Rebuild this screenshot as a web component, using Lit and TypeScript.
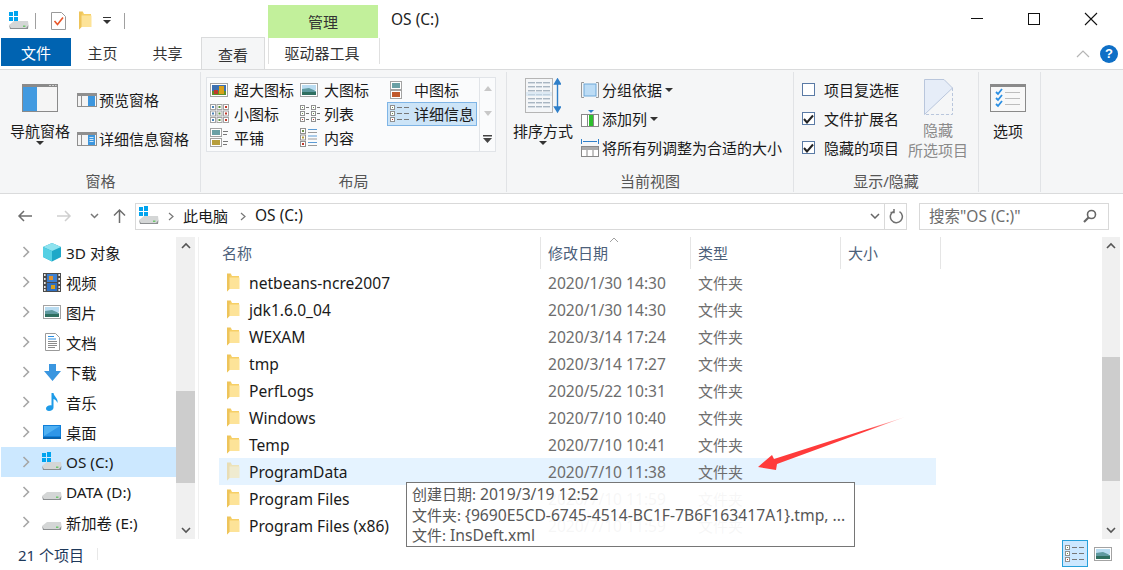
import { LitElement, html, css, svg } from "lit";
import { customElement } from "lit/decorators.js";

const drive = (win = false) => html`<svg width="22" height="20" viewBox="0 0 22 20">
  ${win ? svg`<g fill="#00a4ef"><rect x="1" y="1" width="4" height="4"/><rect x="6" y="0" width="4" height="5"/><rect x="1" y="6" width="4" height="4"/><rect x="6" y="6" width="4" height="4"/></g>` : ""}
  <path d="M1 14 L6 10 H20 L20.5 14 L18 17 H3 Z" fill="#d4d6d6"/><path d="M1 14 L3 17 H18 L20.5 14 L20 18 H2 Z" fill="#8b8e90"/><rect x="15" y="14.6" width="2.4" height="1.2" fill="#57c255"/></svg>`;

const folder = (o = 1) => html`<svg width="14" height="19" viewBox="0 0 14 19" style="opacity:${o}">
  <path d="M1 1 H5 L6 3 H13 V15.5 H1 Z" fill="#f6cf66"/><path d="M1 4.5 H13.5 V16 H3.5 L1 18.5 Z" fill="#fde398"/><path d="M1 0.5 V18.5 L3.5 16 V3 L5 0.5 Z" fill="#eec45a"/></svg>`;

const pic = (w = 18, h = 14) => html`<svg width="${w}" height="${h}" viewBox="0 0 18 14"><rect x=".5" y=".5" width="17" height="13" fill="#fff" stroke="#a3a3a3"/><rect x="2" y="2" width="14" height="5" fill="#b9dcf1"/><path d="M2 6 L9 5 L16 8 V12 H2 Z" fill="#5f9aa0"/><path d="M2 9 L16 9 V12 H2 Z" fill="#2f6f60"/></svg>`;

const pane = (detail: boolean) => html`<svg width="20" height="14" viewBox="0 0 20 14"><rect x=".5" y=".5" width="19" height="13" fill="#f4f4f4" stroke="#8f8f8f"/><rect x="1" y="1" width="18" height="2" fill="#8f8f8f"/><rect x="4" y="3" width="1" height="10" fill="#8f8f8f"/><rect x="11" y="3" width="7" height="10" fill="#3c96de"/>${detail ? svg`<g fill="#cfe5f7"><rect x="12.5" y="5" width="4" height="1"/><rect x="12.5" y="7" width="4" height="1"/><rect x="12.5" y="9" width="4" height="1"/></g>` : ""}</svg>`;

const galleryIcon = (kind: string) => {
  if (kind === "xl") return html`<svg width="18" height="14" viewBox="0 0 18 14"><rect x=".5" y=".5" width="17" height="13" fill="#fff" stroke="#a3a3a3"/><rect x="2" y="2" width="14" height="10" fill="#3b6fb0"/><rect x="2" y="8" width="14" height="4" fill="#5c8f2c"/><rect x="9" y="3" width="5" height="8" fill="#d9a019"/><rect x="4" y="7" width="4" height="4" fill="#c0392b"/></svg>`;
  if (kind === "l") return pic();
  if (kind === "m") return html`<svg width="18" height="18" viewBox="0 0 18 18"><rect x=".5" y=".5" width="11" height="8" fill="#fff" stroke="#a3a3a3"/><rect x="2" y="2" width="8" height="5" fill="#6aa0a5"/><rect x=".5" y="9.5" width="11" height="8" fill="#fff" stroke="#a3a3a3"/><rect x="2" y="11" width="8" height="5" fill="#c0582b"/></svg>`;
  if (kind === "s") return html`<svg width="19" height="19" viewBox="0 0 19 19">${[0, 6.5, 13].map((y) => [0, 6.5, 13].map((x) => svg`<rect x="${x + 0.5}" y="${y + 0.5}" width="5" height="5" fill="#fff" stroke="#a3a3a3"/><rect x="${x + 2}" y="${y + 2}" width="2" height="2" fill="${x > 10 ? "#c0392b" : x > 5 ? "#58913a" : "#4b82b8"}"/>`))}</svg>`;
  if (kind === "list") return html`<svg width="20" height="17" viewBox="0 0 20 17">${[0, 11].map((x) => [0, 6, 12].map((y) => svg`<rect x="${x + 0.5}" y="${y + 0.5}" width="4" height="4" fill="#fff" stroke="#909090"/><rect x="${x + 6}" y="${y + 2}" width="3" height="1" fill="#777"/><rect x="${x + 2}" y="${y + 2}" width="1" height="1" fill="${y > 10 ? "#c0392b" : "#6d8f4a"}"/>`))}</svg>`;
  if (kind === "detail") return html`<svg width="20" height="17" viewBox="0 0 20 17">${[0, 6, 12].map((y) => svg`<rect x=".5" y="${y + 0.5}" width="4" height="4" fill="#fff" stroke="#909090"/><rect x="2" y="${y + 2}" width="1" height="1" fill="${y > 10 ? "#c0392b" : "#6d8f4a"}"/><rect x="7" y="${y + 2}" width="5" height="1" fill="#777"/><rect x="14" y="${y + 2}" width="5" height="1" fill="#777"/>`)}</svg>`;
  if (kind === "tile") return html`<svg width="19" height="19" viewBox="0 0 19 19"><rect x=".5" y=".5" width="11" height="8" fill="#fff" stroke="#a3a3a3"/><rect x="2" y="2" width="8" height="5" fill="#6aa0a5"/><rect x=".5" y="10.5" width="11" height="8" fill="#fff" stroke="#a3a3a3"/><rect x="2" y="12" width="8" height="5" fill="#b79e3c"/><g fill="#777"><rect x="13" y="3" width="5" height="1"/><rect x="13" y="6" width="4" height="1"/><rect x="13" y="13" width="5" height="1"/><rect x="13" y="16" width="4" height="1"/></g></svg>`;
  return html`<svg width="18" height="19" viewBox="0 0 18 19">${[0, 6.5, 13].map((y, i) => svg`<rect x=".5" y="${y + 0.5}" width="5" height="5" fill="#fff" stroke="#909090"/><rect x="2" y="${y + 2}" width="2" height="2" fill="${["#6d8f4a", "#b79e3c", "#c0392b"][i]}"/><rect x="8" y="${y + 1}" width="9" height="1" fill="#5b9bd5"/><rect x="8" y="${y + 4}" width="9" height="1" fill="#9a9a9a"/>`)}</svg>`;
};

const chevronR = html`<svg width="8" height="12" viewBox="0 0 8 12"><path d="M1.5 1 L6.5 6 L1.5 11" fill="none" stroke="#a6a6a6" stroke-width="1.6"/></svg>`;

const navIcons: Record<string, unknown> = {
  cube: html`<svg width="20" height="19" viewBox="0 0 20 19"><path d="M10 0 L19 4 V14 L10 18.5 L1 14 V4 Z" fill="#1ea8c8"/><path d="M10 8 L19 4 L10 0 L1 4 Z" fill="#8fe3ef"/><path d="M10 8 V18.5 L1 14 V4 Z" fill="#55d0e4"/></svg>`,
  film: html`<svg width="18" height="19" viewBox="0 0 18 19"><rect width="18" height="19" fill="#4b4b4b"/><g fill="#e8e8e8">${[1, 5, 9, 13, 16].map((y) => svg`<rect x="1" y="${y}" width="1.6" height="2"/><rect x="15.4" y="${y}" width="1.6" height="2"/>`)}</g><rect x="4" y="1" width="10" height="8" fill="#3c7fd0"/><rect x="4" y="10" width="10" height="8" fill="#2f6fc0"/><rect x="6" y="3" width="4" height="4" fill="#e0902c"/><rect x="8" y="12" width="4" height="4" fill="#d9a019"/></svg>`,
  pic: pic(18, 14),
  doc: html`<svg width="15" height="18" viewBox="0 0 15 18"><path d="M.5 .5 H10.5 L14.5 4.5 V17.5 H.5 Z" fill="#fff" stroke="#9a9a9a"/><g fill="#8a8a8a"><rect x="3" y="8" width="9" height="1"/><rect x="3" y="10" width="9" height="1"/><rect x="3" y="12" width="9" height="1"/><rect x="3" y="14" width="7" height="1"/></g><rect x="3" y="3" width="6" height="1" fill="#2b8fe3"/><rect x="3" y="5.5" width="8" height="1" fill="#2b8fe3"/></svg>`,
  down: html`<svg width="17" height="17" viewBox="0 0 17 17"><path d="M5 0 H12 V7 H17 L8.5 17 L0 7 H5 Z" fill="#3a96e0"/></svg>`,
  music: html`<svg width="13" height="18" viewBox="0 0 13 18"><path d="M5.5 0 H7.5 C8 4 12.5 5 11.5 10 C10.5 7.5 9 6.5 7.5 6 V14.5 C7.5 16.5 5.5 18 3 18 C1 18 0 17 0 15.5 C0 13.5 2.5 12 5.5 12.4 Z" fill="#1e9be8"/></svg>`,
  desk: html`<svg width="18" height="14" viewBox="0 0 18 14"><rect width="18" height="13" fill="#0f7fd9"/><rect x="1" y="1" width="16" height="10" fill="#4fb0f2"/><path d="M1 11 L17 1 V11 Z" fill="#2f96e8"/><rect x="0" y="12" width="18" height="2" fill="#0a62ac"/></svg>`,
  win: drive(true),
  drive: drive(false),
};

const nav = [
  ["cube", "3D 对象"], ["film", "视频"], ["pic", "图片"], ["doc", "文档"], ["down", "下载"],
  ["music", "音乐"], ["desk", "桌面"], ["win", "OS (C:)"], ["drive", "DATA (D:)"], ["drive", "新加卷 (E:)"],
];

const files = [
  ["netbeans-ncre2007", "2020/1/30 14:30"], ["jdk1.6.0_04", "2020/1/30 14:30"], ["WEXAM", "2020/3/14 17:24"],
  ["tmp", "2020/3/14 17:27"], ["PerfLogs", "2020/5/22 10:31"], ["Windows", "2020/7/10 10:40"],
  ["Temp", "2020/7/10 10:41"], ["ProgramData", "2020/7/10 11:38"], ["Program Files", "2020/7/10 11:59"],
  ["Program Files (x86)", "2020/7/10 11:59"],
];

const caret = html`<svg width="8" height="4" viewBox="0 0 8 4"><path d="M0 0 H8 L4 4 Z" fill="#333"/></svg>`;
const scrollUp = html`<svg width="10" height="7" viewBox="0 0 10 7"><path d="M1 6 L5 2 L9 6" fill="none" stroke="#555" stroke-width="1.6"/></svg>`;
const scrollDown = html`<svg width="10" height="7" viewBox="0 0 10 7"><path d="M1 1 L5 5 L9 1" fill="none" stroke="#555" stroke-width="1.6"/></svg>`;
const check = html`<svg width="11" height="10" viewBox="0 0 11 10"><path d="M1 5 L4 8.5 L10 1.5" fill="none" stroke="#222" stroke-width="2"/></svg>`;

@customElement("app-root")
export class AppRoot extends LitElement {
  static styles = css`
    :host { display: block; width: 1123px; height: 570px; position: relative; overflow: hidden; background: #fff;
      font-family: "Noto Sans", "Noto Sans CJK SC", sans-serif; font-size: 15px; color: #1a1a1a; }
    .title { height: 38px; display: flex; align-items: stretch; }
    .qat { width: 268px; display: flex; align-items: center; padding: 3px 0 0 8px; box-sizing: border-box; }
    .qat .sep { width: 1px; height: 16px; background: #a0a0a0; }
    .manage { width: 110px; margin-top: 5px; background: #c2f09b; display: flex; align-items: center; justify-content: center; color: #333; }
    .wintitle { padding: 0 0 0 13px; flex: 1; line-height: 38px; color: #222; font-size: 15.5px; }
    .winbtns { display: flex; align-items: center; gap: 43px; padding: 0 25px 0 0; }
    .tabs { height: 31px; display: flex; border-bottom: 1px solid #dadbdc; box-sizing: content-box; }
    .file { width: 70px; height: 28px; margin-left: 1px; background: #0063b1; color: #fff; display: flex; align-items: center; justify-content: center; }
    .tab { width: 65px; height: 28px; display: flex; align-items: center; justify-content: center; color: #333; margin-left: -1px; }
    .tab + .tab { margin-left: 0; }
    .tab.on { width: 64px; height: 32px; box-sizing: border-box; background: #f5f6f7; border: 1px solid #dadbdc; border-bottom: 0; position: relative; top: -1px; padding-top: 1px; margin-left: 1px; }
    .tab.tool { width: 106px; border: 1px solid #e0e0e0; border-width: 0 1px; margin-left: 3px; height: 24px; padding: 2px 4px 0 0; box-sizing: content-box; }
    .tabend { flex: 1; display: flex; align-items: center; justify-content: flex-end; gap: 10px; padding: 0 5px 0 0; }
    .help { width: 18px; height: 18px; border-radius: 50%; background: #0f6fc6; color: #fff; font: bold 13px/18px "Liberation Sans", sans-serif; text-align: center; }
    .ribbon { height: 123px; background: #f5f6f7; border-bottom: 1px solid #dadbdc; display: flex; padding-left: 1px; }
    .group { box-sizing: border-box; border-right: 1px solid #e1e3e6; margin: 2px 0 1px; display: flex; flex-direction: column; }
    .gbody { flex: 1; display: flex; position: relative; }
    .glabel { height: 24px; line-height: 26px; text-align: center; color: #555; }
    .big { display: flex; flex-direction: column; align-items: center; line-height: 20px; }
    .big .lbl { margin-top: 11px; }
    .big .car { height: 6px; display: flex; justify-content: center; }
    .small { display: flex; align-items: center; height: 29px; gap: 3px; white-space: nowrap; }
    .gallery { margin: 5px 0 0 5px; width: 290px; height: 75px; box-sizing: border-box; border: 1px solid #e1e4e8; background: #fafbfc; display: flex; }
    .ggrid { width: 272px; display: grid; grid-template-columns: 90px 90px 90px; grid-auto-rows: 24px; padding-bottom: 2px; align-content: center; border-right: 1px solid #e1e4e8; }
    .gi { display: flex; align-items: center; white-space: nowrap; padding-left: 3px; box-sizing: border-box; }
    .gi.on { background: #cce4f7; outline: 1px solid #7fb5e6; outline-offset: -1px; }
    .gi .ic { width: 24px; display: flex; }
    .gscroll { flex: 1; display: flex; flex-direction: column; align-items: center; justify-content: space-between; padding: 8px 0 8px; }
    .cb { width: 11px; height: 11px; border: 1px solid #5a7aa5; background: #fff; display: flex; align-items: center; justify-content: center; }
    .dim { color: #8a8a8a; }
    .addr { height: 43px; display: flex; align-items: center; }
    .navb { width: 135px; display: flex; align-items: center; padding-left: 17px; box-sizing: border-box; }
    .abox { width: 772px; height: 27px; margin-top: 1px; box-sizing: border-box; border: 1px solid #d9d9d9; display: flex; align-items: center; padding: 0 0 2px 2px; }
    .abox .nudge { display: flex; margin-top: 2px; }
    .search { width: 190px; height: 27px; margin: 1px 0 0 12px; box-sizing: border-box; border: 1px solid #d9d9d9; color: #6d6d6d; display: flex; align-items: center; justify-content: space-between; padding: 0 11px 2px 9px; font-size: 15.5px; }
    .search .nudge { display: flex; margin-top: 2px; }
    .main { height: 302px; display: flex; }
    .side { width: 175px; margin-left: 1px; box-sizing: border-box; padding-top: 0; }
    .sr { height: 30px; display: flex; align-items: center; padding-left: 21px; font-size: 15.3px; }
    .sr.on { background: #cce8ff; }
    .sr .chev { width: 20px; display: flex; }
    .sr .nic { width: 24px; display: flex; justify-content: center; margin-right: 2px; margin-left: -2px; }
    .sb { width: 19px; background: #f0f0f0; display: flex; flex-direction: column; align-items: center; position: relative; }
    .sb .thumb { position: absolute; left: 0; right: 0; background: #cdcdcd; }
    .sb .a { height: 17px; display: flex; align-items: center; justify-content: center; z-index: 1; }
    .sb .sp { flex: 1; }
    .list { flex: 1; border-left: 1px solid #f0f0f0; margin-left: 3px; padding-left: 20px; position: relative; }
    .hdr { height: 32px; display: flex; color: #4c607a; position: relative; }
    .hc { height: 32px; line-height: 32px; box-sizing: border-box; padding-left: 7px; border-right: 1px solid #e5e5e5; }
    .sort { position: absolute; left: 390px; top: 0; }
    .row { height: 27px; width: 717px; display: flex; align-items: center; color: #1a1a1a; }
    .row.hot { background: #e5f3ff; }
    .row .nm { width: 322px; display: flex; align-items: center; white-space: nowrap; box-sizing: border-box; padding-left: 7px; gap: 9px; font-size: 15.6px; }
    .row .dt { width: 150px; padding-left: 7px; box-sizing: border-box; color: #6d6d6d; font-size: 15.6px; }
    .row .ty { color: #6d6d6d; padding-left: 7px; }
    .status { height: 30px; display: flex; align-items: center; color: #1e395b; padding-left: 18px; position: relative; }
    .stsep { width: 1px; height: 12px; background: #e8e8e8; margin-left: 13px; }
    .views { position: absolute; left: 1062px; top: 0; display: flex; align-items: center; gap: 6px; height: 29px; }
    .v1 { width: 26px; height: 27px; background: #cce8ff; border: 1px solid #26a0da; box-sizing: border-box; display: flex; align-items: center; justify-content: center; }
    .tip { position: absolute; left: 406px; top: 482px; width: 449px; height: 65px; box-sizing: border-box; background: rgba(255,255,255,.94); border: 1px solid #767676; color: #575757; font-size: 15px; line-height: 20.5px; padding: 1px 5px 0; white-space: nowrap; }
    .tip .l { font-size: 15.7px; }
    .arrow { position: absolute; left: 755px; top: 415px; }
  `;

  render() {
    return html`
      <div class="title">
        <div class="qat">
          ${drive(true)}
          <div class="sep" style="margin:0 15px 0 5px"></div>
          <svg width="15" height="18" viewBox="0 0 15 18"><path d="M.5 .5 H10.5 L14.5 4.5 V17.5 H.5 Z" fill="#fff" stroke="#9a9a9a"/><path d="M3.5 9 L6.5 12.5 L12 5.5" fill="none" stroke="#e8562a" stroke-width="1.6"/></svg>
          <span style="width:12px"></span>
          ${folder()}
          <span style="width:11px"></span>
          <svg width="8" height="7" viewBox="0 0 8 7"><rect width="8" height="1" fill="#333"/><path d="M0 3 H8 L4 7 Z" fill="#333"/></svg>
          <div class="sep" style="margin-left:13px"></div>
        </div>
        <div class="manage">管理</div>
        <div class="wintitle">OS (C:)</div>
        <div class="winbtns">
          <svg width="14" height="14" viewBox="0 0 14 14"><rect x="1" y="6" width="12" height="1" fill="#111"/></svg>
          <svg width="14" height="14" viewBox="0 0 14 14"><rect x="1.5" y="1.5" width="11" height="11" fill="none" stroke="#111"/></svg>
          <svg width="14" height="14" viewBox="0 0 14 14"><path d="M1 1 L13 13 M13 1 L1 13" stroke="#111" stroke-width="1.1"/></svg>
        </div>
      </div>
      <div class="tabs">
        <div class="file">文件</div>
        <div class="tab">主页</div>
        <div class="tab">共享</div>
        <div class="tab on">查看</div>
        <div class="tab tool">驱动器工具</div>
        <div class="tabend">
          <svg width="14" height="8" viewBox="0 0 14 8"><path d="M1 7 L7 1 L13 7" fill="none" stroke="#b5b5b5" stroke-width="1.2"/></svg>
          <div class="help">?</div>
        </div>
      </div>
      ${this.ribbon()}
      <div class="addr">
        <div class="navb">
          <svg width="16" height="12" viewBox="0 0 16 12"><path d="M15 6 H2 M7 1 L2 6 L7 11" fill="none" stroke="#6d6d6d" stroke-width="1.5"/></svg>
          <svg style="margin-left:23px" width="16" height="12" viewBox="0 0 16 12"><path d="M1 6 H14 M9 1 L14 6 L9 11" fill="none" stroke="#cfcfcf" stroke-width="1.5"/></svg>
          <svg style="margin-left:18px" width="9" height="6" viewBox="0 0 9 6"><path d="M1 1 L4.5 4.5 L8 1" fill="none" stroke="#777" stroke-width="1.5"/></svg>
          <svg style="margin-left:14px" width="13" height="15" viewBox="0 0 13 15"><path d="M6.5 15 V2 M1 7.5 L6.5 2 L12 7.5" fill="none" stroke="#6d6d6d" stroke-width="1.5"/></svg>
        </div>
        <div class="abox">
          <span class="nudge">${drive(true)}</span>
          <span style="width:8px"></span>
          <span class="nudge"><svg width="6" height="9" viewBox="0 0 6 9"><path d="M1 1 L5 4.5 L1 8" fill="none" stroke="#777" stroke-width="1.2"/></svg></span>
          <span style="margin-left:9px">此电脑</span>
          <span style="width:12px"></span>
          <span class="nudge"><svg width="6" height="9" viewBox="0 0 6 9"><path d="M1 1 L5 4.5 L1 8" fill="none" stroke="#777" stroke-width="1.2"/></svg></span>
          <span style="margin-left:9px;font-size:15.5px">OS (C:)</span>
          <span style="flex:1"></span>
          <span class="nudge"><svg width="10" height="6" viewBox="0 0 10 6"><path d="M1 1 L5 5 L9 1" fill="none" stroke="#666" stroke-width="1.5"/></svg></span>
          <span class="nudge" style="width:1px;height:25px;background:#d9d9d9;margin:2px 4px 0 4px"></span>
          <span class="nudge" style="margin-right:2px"><svg width="15" height="15" viewBox="0 0 15 15"><path d="M5 2.2 A6 6 0 1 0 10.5 2.6 M5 0 V3.5 H1.5" fill="none" stroke="#707070" stroke-width="1.5"/></svg></span>
        </div>
        <div class="search"><span>搜索"OS (C:)"</span>
          <span class="nudge"><svg width="14" height="14" viewBox="0 0 14 14"><circle cx="8.5" cy="5.5" r="4" fill="none" stroke="#666" stroke-width="1.6"/><path d="M5.5 8.5 L1 13" stroke="#666" stroke-width="2.2"/></svg></span>
        </div>
      </div>
      <div class="main">
        <div class="side">
          ${nav.map(([ic, t]) => html`<div class="sr ${t === "OS (C:)" ? "on" : ""}"><span class="chev">${chevronR}</span><span class="nic">${navIcons[ic]}</span><span>${t}</span></div>`)}
        </div>
        <div class="sb">
          <div class="thumb" style="top:154px;height:92px"></div>
          <div class="a">${scrollUp}</div><div class="sp"></div><div class="a">${scrollDown}</div>
        </div>
        <div class="list">
          <div class="hdr">
            <div class="hc" style="width:322px;padding-left:3px">名称</div>
            <div class="hc" style="width:150px">修改日期</div>
            <div class="hc" style="width:150px">类型</div>
            <div class="hc" style="width:100px">大小</div>
            <svg class="sort" width="10" height="6" viewBox="0 0 10 6"><path d="M1 5 L5 1 L9 5" fill="none" stroke="#a0a0a0"/></svg>
          </div>
          ${files.map(([n, d]) => html`<div class="row ${n === "ProgramData" ? "hot" : ""}">
            <div class="nm">${folder(n === "ProgramData" ? 0.45 : 1)}<span>${n}</span></div>
            <div class="dt">${d}</div><div class="ty">文件夹</div></div>`)}
        </div>
        <div class="sb" style="margin-right:3px;width:18px">
          <div class="thumb" style="top:120px;height:124px"></div>
          <div class="a">${scrollUp}</div><div class="sp"></div><div class="a">${scrollDown}</div>
        </div>
      </div>
      <div class="status">
        <span>21 个项目</span><span class="stsep"></span>
        <div class="views">
          <div class="v1">${galleryIcon("detail")}</div>
          ${pic(18, 14)}
        </div>
      </div>
      <div class="tip">创建日期: <span class="l">2019/3/19 12:52</span><br />文件夹: <span class="l">{9690E5CD-6745-4514-BC1F-7B6F163417A1}.tmp, ...</span><br />文件: <span class="l">InsDeft.xml</span></div>
      <svg class="arrow" width="152" height="58" viewBox="0 0 152 58">
        <defs><linearGradient id="g" x1="1" y1="0" x2="0" y2="1"><stop offset="0" stop-color="#ff3b3b" stop-opacity="0.15"/><stop offset="0.25" stop-color="#ff3b3b"/></linearGradient></defs>
        <path d="M150 2 L19 44 L17 40 L3 52 L21 55 L22 49 Z" fill="url(#g)"/>
      </svg>
    `;
  }

  ribbon() {
    const gallery: [string, string, boolean?][] = [
      ["xl", "超大图标"], ["l", "大图标"], ["m", "中图标"], ["s", "小图标"], ["list", "列表"], ["detail", "详细信息", true], ["tile", "平铺"], ["content", "内容"],
    ];
    return html`<div class="ribbon">
      <div class="group" style="width:200px">
        <div class="gbody">
          <div class="big" style="width:78px;padding-top:12px">
            <svg width="36" height="28" viewBox="0 0 36 28"><rect x=".5" y=".5" width="35" height="27" fill="#f5f5f5" stroke="#8a8a8a"/><rect x="1" y="1" width="34" height="2" fill="#8a8a8a"/><rect x="1" y="3" width="14" height="24" fill="#429ae0"/><g fill="#d0d0d0"><rect x="27" y="1" width="2" height="1"/><rect x="30" y="1" width="2" height="1"/><rect x="33" y="1" width="1.5" height="1"/></g></svg>
            <span class="lbl" style="margin-top:9px">导航窗格</span><span class="car">${caret}</span>
          </div>
          <div style="padding-top:8px;margin-left:-2px">
            <div class="small" style="height:39px;gap:2px">${pane(false)}<span>预览窗格</span></div>
            <div class="small" style="height:39px;gap:2px">${pane(true)}<span>详细信息窗格</span></div>
          </div>
        </div>
        <div class="glabel">窗格</div>
      </div>
      <div class="group" style="width:306px">
        <div class="gbody">
          <div class="gallery">
            <div class="ggrid">
              ${gallery.map(([k, t, on]) => html`<div class="gi ${on ? "on" : ""}"><span class="ic">${galleryIcon(k)}</span><span>${t}</span></div>`)}
            </div>
            <div class="gscroll">
              <svg width="8" height="5" viewBox="0 0 8 5"><path d="M0 5 L4 0 L8 5 Z" fill="#c8c8c8"/></svg>
              <svg width="8" height="5" viewBox="0 0 8 5"><path d="M0 0 L4 5 L8 0 Z" fill="#c8c8c8"/></svg>
              <svg width="9" height="8" viewBox="0 0 9 8"><rect width="9" height="1.5" fill="#444"/><path d="M0 3 H9 L4.5 8 Z" fill="#444"/></svg>
            </div>
          </div>
        </div>
        <div class="glabel">布局</div>
      </div>
      <div class="group" style="width:287px">
        <div class="gbody">
          <div class="big" style="width:72px;padding-top:6px">
            <svg width="36" height="36" viewBox="0 0 36 36"><rect x=".5" y=".5" width="27" height="34" fill="#f4f6f8" stroke="#b5b5b5"/><g fill="#a9b6c2">${[4, 8, 12, 16, 20, 24, 28].map((y) => svg`<rect x="3" y="${y}" width="7" height="1.4"/><rect x="11" y="${y}" width="6" height="1.4"/><rect x="18" y="${y}" width="7" height="1.4"/>`)}</g><rect x="1" y="14" width="26" height="4" fill="#cfe3f2" opacity=".6"/><path d="M32.5 3 V32 M29.5 6 L32.5 1 L35.5 6 Z M29.5 29 L32.5 34 L35.5 29 Z" fill="#2f7fc9" stroke="#2f7fc9" stroke-width="1.4"/></svg>
            <span class="lbl" style="margin-top:7px">排序方式</span><span class="car">${caret}</span>
          </div>
          <div style="padding:3px 0 0 2px">
            <div class="small">
              <svg width="18" height="16" viewBox="0 0 18 16"><path d="M3 .5 H.5 V15.5 H3 M15 .5 H17.5 V15.5 H15" fill="none" stroke="#999"/><rect x="3" y="2" width="12" height="12" fill="#bcdcf5" stroke="#6ea8d8"/></svg>
              <span>分组依据</span>${caret}
            </div>
            <div class="small">
              <svg width="18" height="18" viewBox="0 0 18 18"><rect x=".5" y="4.5" width="17" height="12" fill="#fff" stroke="#888"/><rect x="6" y="5" width="1" height="11" fill="#888"/><rect x="12" y="5" width="1" height="11" fill="#888"/><rect x="8" y="5" width="4" height="11" fill="#2ec02e"/><path d="M7 0 H13 L10 3 Z" fill="#2f7fc9"/></svg>
              <span>添加列</span>${caret}
            </div>
            <div class="small">
              <svg width="18" height="18" viewBox="0 0 18 18"><path d="M.5 0 V5 M17.5 0 V5 M2 2.5 H16" stroke="#2f7fc9" fill="none"/><rect x=".5" y="7.5" width="17" height="10" fill="#fff" stroke="#888"/><rect x="1" y="8" width="16" height="3" fill="#aaa"/><path d="M6 11 V17 M12 11 V17" stroke="#888"/></svg>
              <span>将所有列调整为合适的大小</span>
            </div>
          </div>
        </div>
        <div class="glabel">当前视图</div>
      </div>
      <div class="group" style="width:185px">
        <div class="gbody">
          <div style="padding:3px 0 0 8px;width:114px;box-sizing:border-box">
            <div class="small" style="gap:9px"><span class="cb"></span><span>项目复选框</span></div>
            <div class="small" style="gap:9px"><span class="cb">${check}</span><span>文件扩展名</span></div>
            <div class="small" style="gap:9px"><span class="cb">${check}</span><span>隐藏的项目</span></div>
          </div>
          <div class="big dim" style="width:60px;padding-top:7px">
            <svg width="29" height="36" viewBox="0 0 29 36"><path d="M.5 .5 H20 L28.5 9 V35.5 H.5 Z" fill="#e6edf8"/><path d="M28.5 9 V35.5 H.5 L28.5 9" fill="#f5f6f7"/><path d="M.5 35.5 V.5 H20 L28.5 9 L.5 35.5" fill="none" stroke="#b9c6dc"/><path d="M28.5 9 V35.5 H.5" fill="none" stroke="#b9c6dc" stroke-dasharray="3 2"/></svg>
            <span class="lbl" style="margin-top:5px">隐藏</span><span>所选项目</span>
          </div>
        </div>
        <div class="glabel">显示/隐藏</div>
      </div>
      <div class="group" style="width:62px">
        <div class="gbody">
          <div class="big" style="width:58px;padding-top:12px">
            <svg width="36" height="28" viewBox="0 0 36 28"><rect x=".5" y=".5" width="35" height="27" fill="#f8f8f8" stroke="#8a8a8a"/><rect x="1" y="1" width="34" height="2" fill="#8a8a8a"/>${[6, 12, 18].map((y) => svg`<path d="M6 ${y + 2} L8 ${y + 4} L12 ${y - 1}" fill="none" stroke="#2b8fe3" stroke-width="1.8"/><rect x="15" y="${y + 2}" width="15" height="1" fill="#bdbdbd"/>`)}</svg>
            <span class="lbl" style="margin-top:9px">选项</span>
          </div>
        </div>
        <div class="glabel"></div>
      </div>
    </div>`;
  }
}
